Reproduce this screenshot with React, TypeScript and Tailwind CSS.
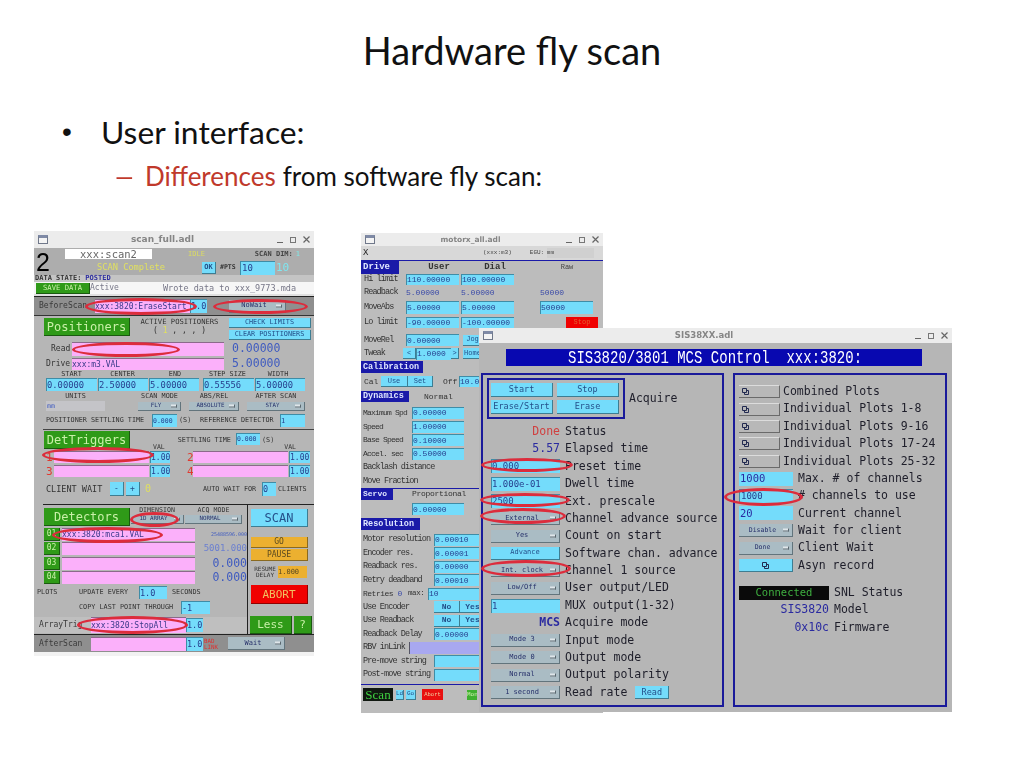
import React from "react";

const T = ({ c = "", children }: { c?: string; children?: React.ReactNode }) => (
  <span className={"whitespace-nowrap leading-none " + c}>{children}</span>
);

const Field = ({ c = "", children }: { c?: string; children?: React.ReactNode }) => (
  <div className={"flex shrink-0 items-center overflow-hidden whitespace-nowrap leading-none bg-[#74dcfb] text-[#27408f] border-l border-t border-[#3f8ca6] " + c}>{children}</div>
);

const Pink = ({ c = "", children }: { c?: string; children?: React.ReactNode }) => (
  <div className={"flex shrink-0 items-center overflow-hidden whitespace-nowrap leading-none bg-[#fbb0fa] text-[#3a3a8a] border-t border-[#8a6a8a] " + c}>{children}</div>
);

const Btn = ({ c = "", children }: { c?: string; children?: React.ReactNode }) => (
  <div className={"flex shrink-0 items-center justify-center whitespace-nowrap leading-none bg-[#74dcfb] text-[#24508a] border-b border-r border-[#3d7d92] border-t-[#c0f0ff] " + c}>{children}</div>
);

const Menu = ({ c = "", children }: { c?: string; children?: React.ReactNode }) => (
  <div className={"relative flex shrink-0 items-center justify-center whitespace-nowrap leading-none bg-[#aabcc4] text-[#26306a] border-b border-r border-[#62747c] " + c}>
    <span className="mr-[6px]">{children}</span>
    <span className="absolute right-[3px] top-1/2 h-[3px] w-[6px] -translate-y-1/2 bg-[#dfe6ea] border-b border-r border-[#5a6870]" />
  </div>
);

const GreenBtn = ({ c = "", children }: { c?: string; children?: React.ReactNode }) => (
  <div className={"flex shrink-0 items-center whitespace-nowrap leading-none bg-[#2f9a18] text-[#c9f0a8] border-b border-r border-[#1a5a10] " + c}>{children}</div>
);

const WinIcon = () => (
  <span className="block h-[9px] w-[10px] border border-[#70788a] bg-[#f4f4f4] border-t-[3px] border-t-[#7f8aa6]" />
);

const TitleBar = ({ c = "", title, tc = "" }: { c?: string; title: string; tc?: string }) => (
  <div className={"relative flex shrink-0 items-center justify-between bg-[#ececec] px-[4px] " + c}>
    <WinIcon />
    <span className={"whitespace-nowrap font-['DejaVu_Sans',sans-serif] font-bold text-[#858585] leading-none " + tc}>{title}</span>
    <span className="flex items-center gap-[7px] text-[#666]">
      <span className="block h-[1px] w-[6px] translate-y-[3px] bg-[#666]" />
      <span className="block h-[6px] w-[6px] border border-[#777]" />
      <svg width="7" height="7" viewBox="0 0 7 7"><path d="M0.5 0.5L6.5 6.5M6.5 0.5L0.5 6.5" stroke="#666" strokeWidth="1.2" /></svg>
    </span>
  </div>
);

const Overlap = () => (
  <svg width="7" height="7" viewBox="0 0 7 7" className="shrink-0"><path d="M0.5 0.5H4.5V4.5H0.5ZM2.5 4.5V6.5H6.5V2.5H4.5" fill="none" stroke="#222a50" strokeWidth="1" /></svg>
);

const Blue = ({ c = "", children }: { c?: string; children?: React.ReactNode }) => (
  <div className={"flex shrink-0 items-center whitespace-nowrap leading-none bg-[#1a1aa8] text-[#dfe6ff] font-bold pl-[2px] " + c}>{children}</div>
);

const MRow = ({ label, c = "", children }: { label: string; c?: string; children?: React.ReactNode }) => (
  <div className={"flex h-[13.5px] shrink-0 items-center " + c}>
    <span className="w-[73px] shrink-0 pl-[2px] whitespace-nowrap text-[8.5px] tracking-[-0.9px] leading-none text-[#333]">{label}</span>
    {children}
  </div>
);

const SisLabel = ({ children }: { children: React.ReactNode }) => (
  <span className="ml-[5px] whitespace-nowrap text-[11.5px] leading-none text-[#1e1e2a]">{children}</span>
);

const SisRow = ({ children }: { children: React.ReactNode }) => (
  <div className="flex h-[17.4px] shrink-0 items-center">{children}</div>
);

const SisMenu = ({ children }: { children: React.ReactNode }) => (
  <Menu c="h-[13px] w-[69px] text-[7px]">{children}</Menu>
);

const SisField = ({ children }: { children: React.ReactNode }) => (
  <Field c="h-[14px] w-[69px] text-[9px]">{children}</Field>
);

const Value = ({ c = "", children }: { c?: string; children: React.ReactNode }) => (
  <span className={"w-[69px] shrink-0 text-right whitespace-nowrap text-[11.5px] leading-none " + c}>{children}</span>
);

const PlotRow = ({ children }: { children: React.ReactNode }) => (
  <SisRow>
    <div className="flex h-[13px] w-[41px] shrink-0 items-center bg-[#b8b8b8] pl-[3px] border-b border-r border-[#6a6a6a] border-t border-t-[#dcdcdc]"><Overlap /></div>
    <span className="ml-[3px] whitespace-nowrap text-[11.5px] leading-none text-[#1e1e2a]">{children}</span>
  </SisRow>
);

const RightRow = ({ children, label }: { children: React.ReactNode; label: string }) => (
  <SisRow>
    {children}
    <SisLabel>{label}</SisLabel>
  </SisRow>
);

const ScanWindow = () => (
  <div className="absolute left-[34px] top-[231px] flex h-[425px] w-[280px] flex-col bg-[#b6b6b6] font-['DejaVu_Sans_Mono',monospace] blur-[0.3px]">
    <TitleBar c="h-[17px]" title="scan_full.adl" tc="text-[9px]" />
    {/* header */}
    <div className="flex h-[27px] shrink-0 overflow-hidden bg-[#adadad]">
      <span className="w-[31px] shrink-0 pl-[2px] pt-[2px] font-['Liberation_Sans',sans-serif] text-[25px] leading-[24px] text-black">2</span>
      <div className="flex flex-col">
        <div className="flex h-[12px] items-center">
          <div className="flex h-[10px] w-[87px] items-center justify-center bg-white text-[10.5px] leading-none text-[#666]">xxx:scan2</div>
          <T c="ml-[36px] text-[7px] text-[#dcdc60]">IDLE</T>
          <T c="ml-[50px] text-[7px] font-bold text-[#444]">SCAN DIM:</T>
          <T c="ml-[3px] text-[7px] text-[#80e8e8]">1</T>
        </div>
        <div className="flex h-[15px] items-center">
          <T c="ml-[32px] w-[105px] text-[8.7px] text-[#e0e060]">SCAN Complete</T>
          <Btn c="h-[12px] w-[14px] text-[7px] font-bold">OK</Btn>
          <T c="ml-[4px] w-[20px] text-[6.5px] font-bold text-[#333]">#PTS</T>
          <Field c="h-[14px] w-[35px] text-[9px] pl-[1px]">10</Field>
          <T c="ml-[1px] text-[11px] text-[#7fe6f0]">10</T>
        </div>
      </div>
    </div>
    <div className="flex h-[7px] shrink-0 items-center bg-[#c4c4c4] pl-[1px]">
      <T c="text-[7px] font-bold text-[#333]">DATA STATE:</T>
      <T c="ml-[4px] text-[7px] font-bold text-[#3030a0]">POSTED</T>
    </div>
    <div className="flex h-[12px] shrink-0 items-center bg-[#f6f6f6]">
      <GreenBtn c="ml-[2px] h-[11px] w-[54px] justify-center text-[7.2px]">SAVE DATA</GreenBtn>
      <T c="w-[73px] text-[8px] text-[#778]">Active</T>
      <T c="text-[8.5px] text-[#778]">Wrote data to xxx_9773.mda</T>
    </div>
    <div className="h-[2px] shrink-0 bg-[#e0e0e0]" />
    <div className="h-[1px] shrink-0 bg-[#222]" />
    <div className="flex h-[18px] shrink-0 items-center bg-[#8f8f8f]">
      <T c="ml-[5px] w-[56px] text-[8px] text-[#3a3a3a]">BeforeScan</T>
      <Pink c="h-[14px] w-[95px] text-[8px]">xxx:3820:EraseStart</Pink>
      <Field c="h-[14px] w-[17px] text-[8.5px]">1.0</Field>
      <Menu c="ml-[22px] h-[13px] w-[57px] text-[7px]">NoWait</Menu>
    </div>
    <div className="h-[1px] shrink-0 bg-[#333]" />
    {/* Positioners */}
    <div className="flex h-[26px] shrink-0">
      <GreenBtn c="ml-[10px] mt-[2px] h-[18px] w-[86px] justify-center text-[12px]">Positioners</GreenBtn>
      <div className="flex w-[99px] flex-col items-center pt-[2px]">
        <T c="text-[7.2px] text-[#333]">ACTIVE POSITIONERS</T>
        <T c="mt-[2px] text-[8px] text-[#333]">( <span className="text-[#e0e060]">1</span> , , , )</T>
      </div>
      <div className="flex flex-col gap-[2px] pt-[2px]">
        <Btn c="h-[10px] w-[82px] text-[6.8px]">CHECK LIMITS</Btn>
        <Btn c="h-[10px] w-[82px] text-[6.8px]">CLEAR POSITIONERS</Btn>
      </div>
    </div>
    <div className="flex h-[14px] shrink-0 items-center">
      <T c="ml-[17px] w-[21px] text-[8px] text-[#333]">Read</T>
      <Pink c="h-[14px] w-[152px] text-[8px]" />
      <T c="ml-[8px] text-[11.5px] text-[#3f5bc0]">0.00000</T>
    </div>
    <div className="mt-[2px] flex h-[12px] shrink-0 items-center">
      <T c="ml-[12px] w-[26px] text-[8px] text-[#333]">Drive</T>
      <Pink c="h-[12px] w-[152px] text-[8px]">xxx:m3.VAL</Pink>
      <T c="ml-[8px] text-[11.5px] text-[#3f5bc0]">5.00000</T>
    </div>
    <div className="flex h-[8px] shrink-0 items-end text-[6.8px] leading-none text-[#333]">
      <span className="ml-[12px] w-[51px] text-center">START</span>
      <span className="w-[51px] text-center">CENTER</span>
      <span className="w-[54px] text-center">END</span>
      <span className="w-[51px] text-center">STEP SIZE</span>
      <span className="w-[50px] text-center">WIDTH</span>
    </div>
    <div className="flex h-[13px] shrink-0 gap-[1px] pl-[12px] text-[8.8px]">
      <Field c="h-[13px] w-[51px]">0.00000</Field>
      <Field c="h-[13px] w-[50px]">2.50000</Field>
      <Field c="h-[13px] w-[50px]">5.00000</Field>
      <Field c="ml-[3px] h-[13px] w-[51px]">0.55556</Field>
      <Field c="h-[13px] w-[50px]">5.00000</Field>
    </div>
    <div className="flex h-[10px] shrink-0 items-center text-[6.8px] leading-none text-[#333]">
      <span className="ml-[12px] w-[59px] text-center">UNITS</span>
      <span className="ml-[33px] w-[43px] text-center">SCAN MODE</span>
      <span className="ml-[8px] w-[50px] text-center">ABS/REL</span>
      <span className="ml-[8px] w-[58px] text-center">AFTER SCAN</span>
    </div>
    <div className="flex h-[10px] shrink-0 items-center">
      <div className="ml-[12px] flex h-[10px] w-[59px] items-center bg-[#c4c4c8] pl-[1px] text-[6.5px] leading-none text-[#3f5bc0]">mm</div>
      <Menu c="ml-[33px] h-[9px] w-[43px] text-[5.8px]">FLY</Menu>
      <Menu c="ml-[8px] h-[9px] w-[50px] text-[5.8px]">ABSOLUTE</Menu>
      <Menu c="ml-[8px] h-[9px] w-[58px] text-[5.8px]">STAY</Menu>
    </div>
    <div className="mt-[3px] flex h-[13px] shrink-0 items-center">
      <T c="ml-[12px] w-[106px] text-[6.8px] text-[#333]">POSITIONER SETTLING TIME</T>
      <Field c="h-[13px] w-[25px] text-[6.5px]">0.000</Field>
      <T c="ml-[2px] w-[21px] text-[6.8px] text-[#333]">(S)</T>
      <T c="w-[80px] text-[6.8px] text-[#333]">REFERENCE DETECTOR</T>
      <Field c="h-[13px] w-[25px] text-[7px]">1</Field>
    </div>
    <div className="ml-[9px] mt-[2px] h-[1px] shrink-0 bg-[#444]" />
    {/* DetTriggers */}
    <div className="flex h-[21px] shrink-0">
      <GreenBtn c="ml-[10px] mt-[1px] h-[18px] w-[86px] justify-center text-[12px]">DetTriggers</GreenBtn>
      <T c="ml-[23px] mt-[14px] text-[6.5px] text-[#333]">VAL</T>
      <T c="ml-[13px] mt-[7px] text-[6.8px] text-[#333]">SETTLING TIME</T>
      <Field c="ml-[5px] mt-[3px] h-[12px] w-[24px] text-[6.5px]">0.000</Field>
      <T c="ml-[2px] mt-[7px] text-[6.8px] text-[#333]">(S)</T>
      <T c="ml-[10px] mt-[14px] text-[6.5px] text-[#333]">VAL</T>
    </div>
    <div className="flex h-[12px] shrink-0 items-center">
      <T c="ml-[12px] w-[8px] text-[11px] text-[#e03a30]">1</T>
      <Pink c="h-[12px] w-[95px]" />
      <Field c="ml-[1px] h-[12px] w-[20px] text-[8px]">1.00</Field>
      <T c="ml-[17px] w-[6px] text-[11px] text-[#e03a30]">2</T>
      <Pink c="h-[12px] w-[95px]" />
      <Field c="ml-[1px] h-[12px] w-[21px] text-[8px]">1.00</Field>
    </div>
    <div className="mt-[2px] flex h-[12px] shrink-0 items-center">
      <T c="ml-[12px] w-[8px] text-[11px] text-[#e03a30]">3</T>
      <Pink c="h-[12px] w-[95px]" />
      <Field c="ml-[1px] h-[12px] w-[20px] text-[8px]">1.00</Field>
      <T c="ml-[17px] w-[6px] text-[11px] text-[#e03a30]">4</T>
      <Pink c="h-[12px] w-[95px]" />
      <Field c="ml-[1px] h-[12px] w-[21px] text-[8px]">1.00</Field>
    </div>
    <div className="mt-[5px] flex h-[14px] shrink-0 items-center">
      <T c="ml-[12px] w-[64px] text-[8.5px] text-[#333]">CLIENT WAIT</T>
      <Btn c="h-[14px] w-[14px] text-[8px]">-</Btn>
      <Btn c="ml-[2px] h-[14px] w-[14px] text-[8px]">+</Btn>
      <T c="ml-[5px] w-[58px] text-[10px] text-[#e0e060]">0</T>
      <T c="w-[59px] text-[6.8px] text-[#333]">AUTO WAIT FOR</T>
      <Field c="h-[14px] w-[14px] text-[8.5px]">0</Field>
      <T c="ml-[2px] text-[6.8px] text-[#333]">CLIENTS</T>
    </div>
    <div className="ml-[9px] mt-[8px] h-[1px] shrink-0 bg-[#222]" />
    {/* lower */}
    <div className="flex h-[129px] shrink-0">
      <div className="flex w-[214px] shrink-0 flex-col border-r border-[#222]">
        <div className="flex h-[23px] shrink-0">
          <GreenBtn c="ml-[10px] mt-[3px] h-[18px] w-[86px] justify-center text-[12px]">Detectors</GreenBtn>
          <div className="flex w-[54px] flex-col items-center pt-[2px]">
            <T c="text-[6.6px] text-[#333]">DIMENSION</T>
            <Menu c="mt-[1px] h-[9px] w-[53px] text-[5.8px]">1D ARRAY</Menu>
          </div>
          <div className="ml-[1px] flex w-[57px] flex-col items-center pt-[2px]">
            <T c="text-[6.6px] text-[#333]">ACQ MODE</T>
            <Menu c="mt-[1px] h-[9px] w-[57px] text-[5.8px]">NORMAL</Menu>
          </div>
        </div>
        {[
          ["01", "xxx:3820:mca1.VAL", "25488596.000", "text-[5px] text-[#3f5bc0]", "mb-[1px]"],
          ["02", "", "5001.000", "text-[9px] text-[#6a7fd0]", "mb-[2px]"],
          ["03", "", "0.000", "text-[11.5px] text-[#3f5bc0]", "mb-[1px]"],
          ["04", "", "0.000", "text-[11.5px] text-[#3f5bc0]", ""],
        ].map(([n, v, val, vc, mb]) => (
          <div key={n} className={"flex h-[13px] shrink-0 items-center " + mb}>
            <GreenBtn c="ml-[10px] h-[13px] w-[16px] justify-center text-[8px]">{n}</GreenBtn>
            <Pink c="ml-[2px] h-[13px] w-[133px] text-[8px]">{v}</Pink>
            <span className={"w-[52px] whitespace-nowrap text-right leading-none " + vc}>{val}</span>
          </div>
        ))}
        <div className="flex h-[17px] shrink-0 items-center">
          <T c="ml-[3px] w-[42px] text-[6.8px] text-[#333]">PLOTS</T>
          <T c="w-[60px] text-[6.8px] text-[#333]">UPDATE EVERY</T>
          <Field c="h-[13px] w-[28px] text-[8.5px]">1.0</Field>
          <T c="ml-[5px] text-[6.8px] text-[#333]">SECONDS</T>
        </div>
        <div className="flex h-[13px] shrink-0 items-center">
          <T c="ml-[45px] w-[102px] text-[6.8px] text-[#333]">COPY LAST POINT THROUGH</T>
          <Field c="h-[13px] w-[29px] text-[8.5px]">-1</Field>
        </div>
        <div className="mt-[3px] flex h-[16px] shrink-0 items-center bg-[#bfbfbf]">
          <T c="ml-[5px] w-[52px] text-[8px] text-[#3a3a3a]">ArrayTrig</T>
          <Pink c="h-[16px] w-[95px] text-[8px]">xxx:3820:StopAll</Pink>
          <Field c="h-[14px] w-[17px] text-[8.5px]">1.0</Field>
        </div>
      </div>
      <div className="flex w-[66px] flex-col pl-[2px]">
        <Btn c="ml-[1px] mt-[4px] h-[18px] w-[57px] text-[12px] text-[#20308a]">SCAN</Btn>
        <div className="ml-[1px] mt-[10px] flex h-[11px] w-[57px] items-center justify-center bg-[#ecb030] text-[8px] leading-none text-[#5a4a20] border-b border-r border-[#8a6a20]">GO</div>
        <div className="ml-[1px] mt-[1px] flex h-[12px] w-[57px] items-center justify-center bg-[#ecb030] text-[8px] leading-none text-[#5a4a20] border-b border-r border-[#8a6a20]">PAUSE</div>
        <div className="ml-[2px] mt-[5px] flex h-[12px] items-center">
          <div className="flex w-[26px] flex-col items-center text-[6px] leading-[6px] text-[#333]"><span>RESUME</span><span>DELAY</span></div>
          <div className="flex h-[12px] w-[29px] items-center overflow-hidden bg-[#ecb030] text-[7px] leading-none text-[#5a4a20]">1.000</div>
        </div>
        <div className="ml-[1px] mt-[7px] flex h-[19px] w-[57px] items-center justify-center bg-[#f00000] text-[11px] leading-none text-[#f0c060] border-b border-r border-[#900000]">ABORT</div>
        <div className="mt-[12px] flex h-[18px] gap-[2px] bg-transparent">
          <GreenBtn c="h-[18px] w-[42px] justify-center text-[11px]">Less</GreenBtn>
          <GreenBtn c="h-[18px] w-[18px] justify-center text-[11px]">?</GreenBtn>
        </div>
      </div>
    </div>
    <div className="h-[1px] shrink-0 bg-[#222]" />
    <div className="flex h-[17px] shrink-0 items-center bg-[#8f8f8f]">
      <T c="ml-[5px] w-[52px] text-[8px] text-[#3a3a3a]">AfterScan</T>
      <Pink c="h-[14px] w-[95px] text-[8px]" />
      <Field c="h-[14px] w-[17px] text-[8.5px]">1.0</Field>
      <div className="ml-[1px] flex w-[24px] flex-col text-[5.8px] leading-[6px] text-[#e03030]"><span>BAD</span><span>LINK</span></div>
      <Menu c="h-[13px] w-[57px] text-[7px]">Wait</Menu>
    </div>
    <div className="flex-1 bg-[#f2f2f2]" />
  </div>
);

const MotorWindow = () => (
  <div className="absolute left-[361px] top-[233px] flex h-[480px] w-[242px] flex-col overflow-hidden bg-[#bcbcbc] font-['Liberation_Mono',monospace] blur-[0.3px]">
    <TitleBar c="h-[13px]" title="motorx_all.adl" tc="text-[7.5px]" />
    <div className="flex h-[14px] shrink-0 items-center bg-[#d8d8d8]">
      <span className="ml-[2px] w-[120px] text-[9px] leading-none text-[#222]">X</span>
      <T c="text-[6px] text-[#444]">(xxx:m3)</T>
      <T c="ml-[18px] w-[17px] text-[6px] text-[#444]">EGU:</T>
      <div className="flex h-[10px] w-[47px] items-center bg-[#d0d0d0] text-[6px] leading-none text-[#444]">mm</div>
    </div>
    <div className="h-[1px] shrink-0 bg-[#1a1aa8]" />
    <div className="flex h-[13px] shrink-0 items-center">
      <Blue c="h-[13px] w-[38px] text-[9px]">Drive</Blue>
      <span className="ml-[14px] w-[52px] text-center text-[9px] font-bold leading-none text-[#333]">User</span>
      <span className="ml-[4px] w-[52px] text-center text-[9px] font-bold leading-none text-[#333]">Dial</span>
      <span className="ml-[21px] w-[50px] text-center text-[7px] leading-none text-[#444]">Raw</span>
    </div>
    <div className="flex h-[11px] shrink-0 items-center">
      <span className="w-[45px] shrink-0 pl-[3px] text-[8.5px] tracking-[-0.9px] leading-none whitespace-nowrap text-[#333]">Hi limit</span>
      <Field c="h-[11px] w-[53px] text-[8px]">110.00000</Field>
      <Field c="ml-[2px] h-[11px] w-[53px] text-[8px]">100.00000</Field>
    </div>
    <div className="flex h-[15px] shrink-0 items-center text-[8px] leading-none text-[#3a4aa8]">
      <span className="w-[45px] shrink-0 pl-[3px] text-[8.5px] tracking-[-0.9px] whitespace-nowrap text-[#333]">Readback</span>
      <span className="w-[55px]">5.00000</span>
      <span className="w-[79px]">5.00000</span>
      <span>50000</span>
    </div>
    <div className="flex h-[14px] shrink-0 items-center">
      <span className="w-[45px] shrink-0 pl-[3px] text-[8.5px] tracking-[-0.9px] leading-none whitespace-nowrap text-[#333]">MoveAbs</span>
      <Field c="h-[13px] w-[53px] text-[8px]">5.00000</Field>
      <Field c="ml-[2px] h-[13px] w-[53px] text-[8px]">5.00000</Field>
      <Field c="ml-[26px] h-[13px] w-[53px] text-[8px]">50000</Field>
    </div>
    <div className="flex h-[16px] shrink-0 items-center">
      <span className="w-[45px] shrink-0 pl-[3px] text-[8.5px] tracking-[-0.9px] leading-none whitespace-nowrap text-[#333]">Lo limit</span>
      <Field c="h-[11px] w-[53px] text-[8px]">-90.00000</Field>
      <Field c="ml-[2px] h-[11px] w-[53px] text-[8px]">-100.00000</Field>
      <div className="ml-[52px] flex h-[11px] w-[32px] items-center justify-center bg-[#f00000] text-[7px] leading-none text-[#e06030]">Stop</div>
    </div>
    <div className="mt-[3px] flex h-[14px] shrink-0 items-center">
      <span className="w-[45px] shrink-0 pl-[3px] text-[8.5px] tracking-[-0.9px] leading-none whitespace-nowrap text-[#333]">MoveRel</span>
      <Field c="h-[12px] w-[53px] text-[8px]">0.00000</Field>
      <Btn c="ml-[4px] h-[11px] w-[20px] text-[7px]">Jog</Btn>
    </div>
    <div className="flex h-[13px] shrink-0 items-center">
      <span className="w-[42px] shrink-0 pl-[3px] text-[8.5px] tracking-[-0.9px] leading-none whitespace-nowrap text-[#333]">Tweak</span>
      <Btn c="h-[11px] w-[13px] text-[7px]">&lt;</Btn>
      <Field c="h-[12px] w-[35px] text-[8px]">1.0000</Field>
      <Btn c="h-[11px] w-[8px] text-[7px]">&gt;</Btn>
      <Btn c="ml-[4px] h-[11px] w-[20px] text-[7px]">Home</Btn>
    </div>
    <div className="mt-[1px] flex h-[12px] shrink-0 items-center">
      <Blue c="h-[12px] w-[62px] text-[8.5px]">Calibration</Blue>
    </div>
    <div className="mt-[2px] flex h-[13px] shrink-0 items-center text-[8px] leading-none text-[#333]">
      <span className="w-[20px] pl-[3px]">Cal</span>
      <Btn c="h-[11px] w-[27px] text-[7px]">Use</Btn>
      <Btn c="h-[11px] w-[25px] text-[7px]">Set</Btn>
      <span className="ml-[10px] w-[16px]">Off</span>
      <Field c="h-[11px] w-[20px] text-[8px]">10.0</Field>
    </div>
    <div className="mt-[3px] flex h-[11px] shrink-0 items-center">
      <Blue c="h-[11px] w-[48px] text-[8.5px]">Dynamics</Blue>
      <span className="ml-[15px] text-[8px] leading-none text-[#333]">Normal</span>
    </div>
    <div className="h-[4px] shrink-0" />
    {[["Maximum Spd", "0.00000"], ["Speed", "1.00000"], ["Base Speed", "0.10000"], ["Accel. sec", "0.50000"]].map(([l, v]) => (
      <div key={l} className="flex h-[13.7px] shrink-0 items-center">
        <span className="w-[51px] shrink-0 pl-[2px] whitespace-nowrap text-[8px] tracking-[-0.8px] leading-none text-[#333]">{l}</span>
        <Field c="h-[12px] w-[52px] text-[8px]">{v}</Field>
      </div>
    ))}
    <MRow label="Backlash distance" />
    <MRow label="Move Fraction" />
    <div className="flex h-[12px] shrink-0 items-center border-t border-[#1a1aa8]">
      <Blue c="h-[11px] w-[32px] text-[8px]">Servo</Blue>
      <span className="ml-[19px] whitespace-nowrap text-[8px] tracking-[-0.3px] leading-none text-[#333]">Proportional</span>
    </div>
    <div className="mt-[3px] flex h-[13px] shrink-0 items-center">
      <Field c="ml-[51px] h-[12px] w-[52px] text-[8px]">0.00000</Field>
    </div>
    <div className="mt-[2px] flex h-[12px] shrink-0 items-center">
      <Blue c="h-[12px] w-[59px] text-[8.5px]">Resolution</Blue>
    </div>
    <div className="h-[3px] shrink-0" />
    <MRow label="Motor resolution"><Field c="h-[12px] w-[46px] text-[8px]">0.00010</Field></MRow>
    <MRow label="Encoder res."><Field c="h-[12px] w-[46px] text-[8px]">0.00001</Field></MRow>
    <MRow label="Readback res."><Field c="h-[12px] w-[46px] text-[8px]">0.00000</Field></MRow>
    <MRow label="Retry deadband"><Field c="h-[12px] w-[46px] text-[8px]">0.00010</Field></MRow>
    <div className="flex h-[13.5px] shrink-0 items-center text-[8px] leading-none">
      <span className="w-[47px] pl-[2px] tracking-[-0.5px] text-[#333] whitespace-nowrap">Retries <span className="text-[#3a4aa8]">0</span></span>
      <span className="w-[19px] text-[7.5px] tracking-[-0.4px] text-[#333]">max:</span>
      <Field c="ml-[1px] h-[12px] w-[52px] text-[8px]">10</Field>
    </div>
    <MRow label="Use Encoder"><Btn c="h-[12px] w-[26px] text-[8px] font-bold text-[#222]">No</Btn><Btn c="h-[12px] w-[26px] text-[8px] font-bold text-[#222]">Yes</Btn></MRow>
    <MRow label="Use Readback"><Btn c="h-[12px] w-[26px] text-[8px] font-bold text-[#222]">No</Btn><Btn c="h-[12px] w-[26px] text-[8px] font-bold text-[#222]">Yes</Btn></MRow>
    <MRow label="Readback Delay"><Field c="h-[12px] w-[46px] text-[8px]">0.00000</Field></MRow>
    <div className="flex h-[13.5px] shrink-0 items-center">
      <span className="w-[48px] pl-[2px] whitespace-nowrap text-[8.5px] tracking-[-0.9px] leading-none text-[#333]">RBV inLink</span>
      <div className="h-[12px] w-[70px] bg-[#a8a8f0] border-l border-[#556]" />
    </div>
    <MRow label="Pre-move string"><Field c="h-[12px] w-[46px] text-[8px]" /></MRow>
    <MRow label="Post-move string"><Field c="h-[12px] w-[46px] text-[8px]" /></MRow>
    <div className="mt-[3px] h-[1px] shrink-0 bg-[#1a1aa8]" />
    <div className="mt-[3px] flex h-[13px] shrink-0 items-center">
      <div className="ml-[2px] flex h-[13px] w-[30px] items-center justify-center bg-[#101810] font-['Liberation_Serif',serif] text-[13px] leading-none text-[#3fd040]">Scan</div>
      <Btn c="ml-[3px] h-[10px] w-[8px] text-[6px]">Ld</Btn>
      <Btn c="ml-[2px] h-[10px] w-[10px] text-[6px]">Go</Btn>
      <div className="ml-[6px] flex h-[11px] w-[21px] items-center justify-center bg-[#e81010] text-[5.5px] leading-none text-[#f0d0a0]">Abort</div>
      <div className="ml-[24px] flex h-[10px] w-[10px] items-center overflow-hidden bg-[#3fb030] text-[6px] leading-none text-[#d0f0b0]">Mon</div>
    </div>
  </div>
);

const SisWindow = () => (
  <div className="absolute left-[479px] top-[328px] flex h-[384px] w-[473px] flex-col bg-[#b6b6b6] font-['DejaVu_Sans_Mono',monospace] blur-[0.3px]">
    <TitleBar c="h-[15px]" title="SIS38XX.adl" tc="text-[8.5px]" />
    <div className="ml-[27px] mt-[6px] flex h-[17px] w-[416px] shrink-0 items-center bg-[#0808b0] pl-[62px]">
      <span className="origin-left scale-y-[1.3] whitespace-pre font-['Liberation_Mono',monospace] text-[14px] leading-none text-white">SIS3820/3801 MCS Control  xxx:3820:</span>
    </div>
    <div className="ml-[2px] mt-[7px] flex h-[334px] gap-[9px]">
      {/* left panel */}
      <div className="flex w-[243px] shrink-0 flex-col border-2 border-[#1a1a9a] pl-[4px]">
        <div className="mt-[3px] flex h-[41px] shrink-0">
          <div className="flex h-[41px] w-[138px] flex-col gap-[3px] border-2 border-[#1a1a9a] pl-[2px] pt-[3px]">
            <div className="flex gap-[4px]">
              <Btn c="h-[14px] w-[62px] text-[8.5px]">Start</Btn>
              <Btn c="h-[14px] w-[62px] text-[8.5px]">Stop</Btn>
            </div>
            <div className="flex gap-[4px]">
              <Btn c="h-[14px] w-[62px] text-[8.5px]">Erase/Start</Btn>
              <Btn c="h-[14px] w-[62px] text-[8.5px]">Erase</Btn>
            </div>
          </div>
          <span className="ml-[4px] self-center whitespace-nowrap text-[11.5px] leading-none text-[#1e1e2a]">Acquire</span>
        </div>
        <div className="h-[4px] shrink-0" />
        <div className="flex flex-col pl-[4px]">
          <SisRow><Value c="text-[#d04040]">Done</Value><SisLabel>Status</SisLabel></SisRow>
          <SisRow><Value c="text-[#2a2aa0]">5.57</Value><SisLabel>Elapsed time</SisLabel></SisRow>
          <SisRow><SisField>0.000</SisField><SisLabel>Preset time</SisLabel></SisRow>
          <SisRow><SisField>1.000e-01</SisField><SisLabel>Dwell time</SisLabel></SisRow>
          <SisRow><SisField>2500</SisField><SisLabel>Ext. prescale</SisLabel></SisRow>
          <SisRow><SisMenu>External</SisMenu><SisLabel>Channel advance source</SisLabel></SisRow>
          <SisRow><SisMenu>Yes</SisMenu><SisLabel>Count on start</SisLabel></SisRow>
          <SisRow><Btn c="h-[13px] w-[69px] text-[7px]">Advance</Btn><SisLabel>Software chan. advance</SisLabel></SisRow>
          <SisRow><SisMenu>Int. clock</SisMenu><SisLabel>Channel 1 source</SisLabel></SisRow>
          <SisRow><SisMenu>Low/Off</SisMenu><SisLabel>User output/LED</SisLabel></SisRow>
          <SisRow><SisField>1</SisField><SisLabel>MUX output(1-32)</SisLabel></SisRow>
          <SisRow><Value c="font-bold text-[#2a2aa0]">MCS</Value><SisLabel>Acquire mode</SisLabel></SisRow>
          <SisRow><SisMenu>Mode 3</SisMenu><SisLabel>Input mode</SisLabel></SisRow>
          <SisRow><SisMenu>Mode 0</SisMenu><SisLabel>Output mode</SisLabel></SisRow>
          <SisRow><SisMenu>Normal</SisMenu><SisLabel>Output polarity</SisLabel></SisRow>
          <SisRow>
            <SisMenu>1 second</SisMenu>
            <SisLabel>Read rate</SisLabel>
            <Btn c="ml-[8px] h-[13px] w-[34px] text-[8.5px]">Read</Btn>
          </SisRow>
        </div>
      </div>
      {/* right panel */}
      <div className="flex w-[214px] shrink-0 flex-col border-2 border-[#1a1a9a] pl-[4px] pt-[8px]">
        <PlotRow>Combined Plots</PlotRow>
        <PlotRow>Individual Plots 1-8</PlotRow>
        <PlotRow>Individual Plots 9-16</PlotRow>
        <PlotRow>Individual Plots 17-24</PlotRow>
        <PlotRow>Individual Plots 25-32</PlotRow>
        <RightRow label="Max. # of channels"><div className="flex h-[14px] w-[54px] items-center bg-[#74dcfb] pl-[1px] text-[10.5px] leading-none text-[#2a2aa0]">1000</div></RightRow>
        <RightRow label="# channels to use"><Field c="h-[14px] w-[54px] pl-[1px] text-[9px]">1000</Field></RightRow>
        <RightRow label="Current channel"><div className="flex h-[14px] w-[54px] items-center bg-[#74dcfb] pl-[1px] text-[10.5px] leading-none text-[#2a2aa0]">20</div></RightRow>
        <RightRow label="Wait for client"><Menu c="h-[13px] w-[54px] text-[6.5px]">Disable</Menu></RightRow>
        <RightRow label="Client Wait"><Menu c="h-[13px] w-[54px] text-[6.5px]">Done</Menu></RightRow>
        <RightRow label="Asyn record"><div className="flex h-[13px] w-[54px] items-center justify-center bg-[#74dcfb] border-b border-r border-[#3d7d92]"><Overlap /></div></RightRow>
        <div className="h-[9.6px] shrink-0" />
        <SisRow>
          <div className="flex h-[14px] w-[90px] items-center justify-center bg-[#0a0a0a] text-[10.5px] leading-none text-[#3fb040]">Connected</div>
          <SisLabel>SNL Status</SisLabel>
        </SisRow>
        <SisRow>
          <span className="w-[90px] text-right text-[11.5px] leading-none text-[#2a2aa0]">SIS3820</span>
          <SisLabel>Model</SisLabel>
        </SisRow>
        <SisRow>
          <span className="w-[90px] text-right text-[11.5px] leading-none text-[#2a2aa0]">0x10c</span>
          <SisLabel>Firmware</SisLabel>
        </SisRow>
      </div>
    </div>
  </div>
);

const ringBase = "absolute rounded-[50%] border-[3px] border-[#dc2c3c] ";

export default function App() {
  return (
    <div className="relative h-[768px] w-[1024px] overflow-hidden bg-white font-['Lato',sans-serif] text-[#111]">
      <h1 className="pt-[27px] text-center text-[38px] leading-[46px] font-normal">Hardware fly scan</h1>
      <div className="ml-[62px] mt-[41px] flex items-center text-[31.8px] leading-[36px]">
        <span className="w-[39px] font-['Liberation_Sans',sans-serif] text-[28px]">•</span>
        <span>User interface:</span>
      </div>
      <div className="ml-[113px] mt-[10px] flex items-center text-[26px] leading-[32px]">
        <span className="w-[32px] origin-left scale-x-[1.5] text-[#c0392b]">–</span>
        <span className="text-[#c0392b]">Differences</span>
        <span className="ml-[7px]">from software fly scan:</span>
      </div>

      <ScanWindow />
      <MotorWindow />
      <SisWindow />

      <div className={ringBase + "left-[85px] top-[298px] h-[17px] w-[112px]"} />
      <div className={ringBase + "left-[213px] top-[299px] h-[15px] w-[95px]"} />
      <div className={ringBase + "left-[72px] top-[342px] h-[15px] w-[108px]"} />
      <div className={ringBase + "left-[42px] top-[447px] h-[16px] w-[112px]"} />
      <div className={ringBase + "left-[130px] top-[512px] h-[15px] w-[49px]"} />
      <div className={ringBase + "left-[52px] top-[527px] h-[16px] w-[111px]"} />
      <div className={ringBase + "left-[77px] top-[616px] h-[18px] w-[111px]"} />
      <div className={ringBase + "left-[481px] top-[458px] h-[14px] w-[92px]"} />
      <div className={ringBase + "left-[480px] top-[493px] h-[14px] w-[90px]"} />
      <div className={ringBase + "left-[480px] top-[508px] h-[16px] w-[86px]"} />
      <div className={ringBase + "left-[481px] top-[560px] h-[17px] w-[90px]"} />
      <div className={ringBase + "left-[724px] top-[488px] h-[18px] w-[79px]"} />
    </div>
  );
}
